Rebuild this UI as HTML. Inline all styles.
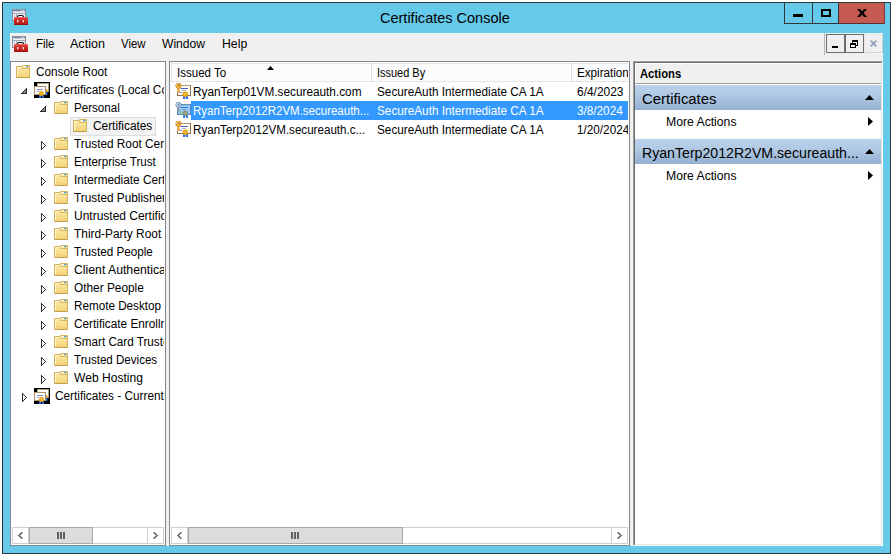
<!DOCTYPE html>
<html>
<head>
<meta charset="utf-8">
<title>Certificates Console</title>
<style>
html,body{margin:0;padding:0;}
body{width:892px;height:555px;overflow:hidden;position:relative;background:#fff;font-family:"Liberation Sans",sans-serif;font-size:12px;color:#000;}
.a{position:absolute;}
.t{position:absolute;white-space:nowrap;line-height:16px;height:16px;transform-origin:0 50%;}
#win{left:2px;top:2px;width:887px;height:550px;border:1px solid #33373c;background:#65c9e9;}
#client{left:10px;top:33px;width:873px;height:513px;background:#f0f0f0;}
.pane{background:#fff;overflow:hidden;}
.ic{position:absolute;width:16px;height:16px;overflow:visible;}
.sb{position:absolute;height:15px;border:1px solid #cfcfcf;background:#fff;}
.sbb{position:absolute;top:-1px;width:15px;height:15px;border:1px solid #cfcfcf;background:#fff;}
.thumb{position:absolute;top:-1px;height:15px;border:1px solid #a8a8a8;background:#dcdcdc;}
.grip{position:absolute;top:4px;width:2px;height:7px;background:#606060;}
.sec{position:absolute;left:635px;width:246px;height:25px;background:linear-gradient(#bad2ea,#b0c9e4 40%,#94b0d2);}
</style>
</head>
<body>
<svg width="0" height="0" style="position:absolute">
<defs>
<linearGradient id="fg" x1="0" y1="0" x2="0" y2="1"><stop offset="0" stop-color="#fdedaf"/><stop offset="1" stop-color="#f3d173"/></linearGradient>
<linearGradient id="rg" x1="0" y1="0" x2="0" y2="1"><stop offset="0" stop-color="#e0453f"/><stop offset="0.45" stop-color="#cf2a26"/><stop offset="1" stop-color="#b01612"/></linearGradient>
<symbol id="folder" viewBox="0 0 16 16">
<path d="M1.5 2.5 H7 L7.6 1.5 H14.5 V13.5 H1.5 Z" fill="url(#fg)" stroke="#d3b05a" stroke-width="1"/>
<path d="M1.5 13.5 H14.5" stroke="#c09e4c" stroke-width="1"/>
<path d="M7.2 2.8 V4.5 H14" fill="none" stroke="#d9b862" stroke-width="1"/>
<path d="M2.5 3.5 H6.5 M2.5 3.5 V12.5" fill="none" stroke="#fff6cf" stroke-width="1"/>
<rect x="9" y="2" width="2.4" height="1.2" fill="#fff"/><rect x="11.2" y="2" width="2.2" height="1.2" fill="#3d8fe0"/>
</symbol>
<symbol id="certs" viewBox="0 0 16 16">
<rect x="0" y="0" width="16" height="16" fill="#000"/>
<rect x="3.5" y="1.5" width="11" height="8" fill="#fff" stroke="#b29c78"/>
<rect x="0.5" y="4.5" width="11" height="8" fill="#fff" stroke="#a8926e"/>
<rect x="3" y="7" width="6" height="1" fill="#8a90dc"/><rect x="3" y="9" width="2" height="1" fill="#9aa0e0"/>
<rect x="12" y="7" width="1.4" height="3" fill="#e0a010"/><rect x="12" y="10" width="1.4" height="3" fill="#2a6ae8"/>
<path d="M5.2 13 H7.2 L7 16 H5 Z M7.8 13 H9.8 L10 16 H8 Z" fill="#2a6ae8"/>
<circle cx="7.4" cy="11.5" r="2.5" fill="#e6a00e"/><circle cx="7.4" cy="11.4" r="1" fill="#f6cc48"/>
</symbol>
<symbol id="cert" viewBox="0 0 16 16">
<rect x="2.5" y="2.5" width="13" height="10" fill="#fffdf8" stroke="#93734e"/>
<path d="M3 2.5 H15" stroke="#b39a76" stroke-width="1"/>
<rect x="5.6" y="5" width="7.3" height="1" fill="#5058c4"/><rect x="7" y="7" width="3.8" height="1" fill="#a4aae2"/><rect x="5" y="9" width="2" height="1" fill="#7484d4"/>
<path d="M8.2 13 H10.3 L10 16 H8 Z M10.7 13 H12.8 L13 16 H11 Z" fill="#2462ea"/>
<circle cx="10.3" cy="11.3" r="2.7" fill="#e7a10f"/><circle cx="10.3" cy="11.2" r="1.1" fill="#f8d24c"/>
<path d="M3.3 5 V9.9" stroke="#e89a28" stroke-width="1.9" fill="none"/><path d="M2.7 5 V9.6" stroke="#fbd48a" stroke-width="0.7" fill="none"/><rect x="4.1" y="8" width="0.9" height="1" fill="#c07a18"/>
<circle cx="3.5" cy="2.7" r="2.7" fill="#f4b448" stroke="#d28a22" stroke-width="0.9"/><path d="M1.6 2.6 A2 2 0 0 1 3.4 0.9" stroke="#fdebc0" stroke-width="0.9" fill="none"/><circle cx="3.6" cy="2.3" r="0.75" fill="#6b4a22"/>
</symbol>
<symbol id="certsel" viewBox="0 0 16 16">
<rect x="2.5" y="2.5" width="13" height="10" fill="#99cafc" stroke="#5f86b6"/>
<rect x="5.6" y="5" width="7.3" height="1" fill="#4278dc"/><rect x="7" y="7" width="3.8" height="1" fill="#6ea2f2"/><rect x="4.6" y="9.6" width="2.4" height="1.2" fill="#8ccc3c"/>
<path d="M8.2 13 H10.3 L10 16 H8 Z M10.7 13 H12.8 L13 16 H11 Z" fill="#2a7cf2"/>
<circle cx="10.3" cy="11.3" r="2.7" fill="#86967a"/><circle cx="10.3" cy="11.2" r="1.1" fill="#a3ae98"/>
<path d="M3.3 5 V9.9" stroke="#8a9fb3" stroke-width="1.9" fill="none"/><rect x="4.1" y="8" width="0.9" height="1" fill="#6f859b"/>
<circle cx="3.5" cy="2.7" r="2.7" fill="#a9c6de" stroke="#8098b0" stroke-width="0.9"/><path d="M1.6 2.6 A2 2 0 0 1 3.4 0.9" stroke="#d4e6f6" stroke-width="0.9" fill="none"/><circle cx="3.6" cy="2.3" r="0.75" fill="#6d8297"/>
</symbol>
<symbol id="mmc" viewBox="0 0 16 16">
<rect x="0.5" y="0.5" width="13" height="11" fill="#eef0f5" stroke="#8d909c"/>
<rect x="1" y="1" width="12" height="1.3" fill="#7c87a6"/><rect x="1" y="2.3" width="12" height="0.7" fill="#c9cddb"/><rect x="9" y="1.2" width="1" height="1" fill="#fff"/><rect x="11" y="1.2" width="1" height="1" fill="#fff"/>
<rect x="1" y="4" width="12" height="1" fill="#a4a8b8"/><rect x="4" y="5" width="1" height="6" fill="#a4a8b8"/><rect x="2" y="6.5" width="1" height="1" fill="#8d909c"/>
<path d="M5.6 8.6 V7.4 Q5.6 6.5 7 6.5 H10 Q11.4 6.5 11.4 7.4 V8.6" fill="#fff" stroke="#111" stroke-width="1.2"/>
<path d="M3 8 H15 L16 9 V16 H2 V9 Z" fill="url(#rg)"/>
<rect x="3" y="8" width="12" height="1" fill="#e8625a"/>
<rect x="5" y="11" width="1.4" height="2.4" fill="#f0d8d0"/><rect x="10.6" y="11" width="1.4" height="2.4" fill="#f0d8d0"/>
<rect x="2" y="15" width="14" height="1" fill="#9a100c"/>
</symbol>
<symbol id="exp" viewBox="0 0 7 7"><path d="M5.5 0.5 V5.5 H0.5 Z" fill="#8a8a8a" stroke="#2c2c2c" stroke-width="1" shape-rendering="crispEdges"/></symbol>
<symbol id="col" viewBox="0 0 6 10"><path d="M0.5 0.5 V8.5 L4.5 4.5 Z" fill="#fff" stroke="#333" stroke-width="1" shape-rendering="crispEdges"/></symbol>
</defs>
</svg>

<div id="win" class="a"></div>

<!-- caption buttons -->
<div class="a" style="left:784px;top:3px;width:54px;height:20px;border-left:1px solid #33373c;border-bottom:1px solid #33373c;"></div>
<div class="a" style="left:812px;top:3px;width:1px;height:20px;background:#33373c;"></div>
<div class="a" style="left:838px;top:3px;width:45px;height:20px;background:#c45a50;border-left:1px solid #33373c;border-right:1px solid #7c3a36;border-bottom:1px solid #5c3030;"></div>
<div class="a" style="left:793px;top:14px;width:10px;height:3px;background:#000;"></div>
<div class="a" style="left:821px;top:9px;width:6px;height:4px;border:2px solid #000;"></div>
<svg class="a" style="left:857px;top:9px;" width="10" height="8" viewBox="0 0 10 8"><path d="M0 0 H3 L5 2.4 L7 0 H10 L6.5 4 L10 8 H7 L5 5.6 L3 8 H0 L3.5 4 Z" fill="#000"/></svg>

<svg class="ic" style="left:12px;top:9px"><use href="#mmc"/></svg>

<div id="client" class="a"></div>
<svg class="ic" style="left:12px;top:36px"><use href="#mmc"/></svg>

<!-- MDI child buttons -->
<div class="a" style="left:824px;top:33px;width:1px;height:22px;background:#b4b4b4;"></div>
<div class="a" style="left:826px;top:34px;width:17px;height:17px;border:1px solid #6d6d6d;background:#f0f0f0;"></div>
<div class="a" style="left:845px;top:34px;width:17px;height:17px;border:1px solid #6d6d6d;background:#f0f0f0;"></div>
<div class="a" style="left:864px;top:34px;width:17px;height:17px;border:1px solid #d0d0d0;border-top-color:#e8e8e8;border-left-color:#e8e8e8;background:#f0f0f0;"></div>
<div class="a" style="left:832px;top:46px;width:6px;height:2px;background:#000;"></div>
<div class="a" style="left:852px;top:40px;width:4px;height:3px;border:1px solid #000;border-top-width:2px;"></div>
<div class="a" style="left:850px;top:43px;width:4px;height:2px;border:1px solid #000;border-top-width:2px;background:#f0f0f0;"></div>
<svg class="a" style="left:870px;top:40px;" width="7" height="7" viewBox="0 0 7 7"><path d="M0.7 0.7 L6.3 6.3 M6.3 0.7 L0.7 6.3" stroke="#93a6bc" stroke-width="1.9" fill="none"/></svg>

<!-- ===== tree pane ===== -->
<div class="a" style="left:10px;top:61px;width:154px;height:483px;border:1px solid #828790;background:#fff;"></div>
<div class="a pane" id="tree" style="left:11px;top:62px;width:153px;height:465px;">
<div class="a" style="left:59px;top:55px;width:84px;height:17px;border:1px solid #dedede;background:#f2f2f2;"></div>
<svg class="ic" style="left:4px;top:2px"><use href="#folder"/></svg>
<svg class="ic" style="left:23px;top:20px"><use href="#certs"/></svg>
<svg class="a" style="left:10px;top:26px" width="7" height="7"><use href="#exp"/></svg>
<svg class="ic" style="left:42px;top:38px"><use href="#folder"/></svg>
<svg class="a" style="left:29px;top:44px" width="7" height="7"><use href="#exp"/></svg>
<svg class="ic" style="left:61px;top:56px"><use href="#folder"/></svg>
<svg class="ic" style="left:42px;top:74px"><use href="#folder"/></svg>
<svg class="a" style="left:30px;top:79px" width="6" height="10"><use href="#col"/></svg>
<svg class="ic" style="left:42px;top:92px"><use href="#folder"/></svg>
<svg class="a" style="left:30px;top:97px" width="6" height="10"><use href="#col"/></svg>
<svg class="ic" style="left:42px;top:110px"><use href="#folder"/></svg>
<svg class="a" style="left:30px;top:115px" width="6" height="10"><use href="#col"/></svg>
<svg class="ic" style="left:42px;top:128px"><use href="#folder"/></svg>
<svg class="a" style="left:30px;top:133px" width="6" height="10"><use href="#col"/></svg>
<svg class="ic" style="left:42px;top:146px"><use href="#folder"/></svg>
<svg class="a" style="left:30px;top:151px" width="6" height="10"><use href="#col"/></svg>
<svg class="ic" style="left:42px;top:164px"><use href="#folder"/></svg>
<svg class="a" style="left:30px;top:169px" width="6" height="10"><use href="#col"/></svg>
<svg class="ic" style="left:42px;top:182px"><use href="#folder"/></svg>
<svg class="a" style="left:30px;top:187px" width="6" height="10"><use href="#col"/></svg>
<svg class="ic" style="left:42px;top:200px"><use href="#folder"/></svg>
<svg class="a" style="left:30px;top:205px" width="6" height="10"><use href="#col"/></svg>
<svg class="ic" style="left:42px;top:218px"><use href="#folder"/></svg>
<svg class="a" style="left:30px;top:223px" width="6" height="10"><use href="#col"/></svg>
<svg class="ic" style="left:42px;top:236px"><use href="#folder"/></svg>
<svg class="a" style="left:30px;top:241px" width="6" height="10"><use href="#col"/></svg>
<svg class="ic" style="left:42px;top:254px"><use href="#folder"/></svg>
<svg class="a" style="left:30px;top:259px" width="6" height="10"><use href="#col"/></svg>
<svg class="ic" style="left:42px;top:272px"><use href="#folder"/></svg>
<svg class="a" style="left:30px;top:277px" width="6" height="10"><use href="#col"/></svg>
<svg class="ic" style="left:42px;top:290px"><use href="#folder"/></svg>
<svg class="a" style="left:30px;top:295px" width="6" height="10"><use href="#col"/></svg>
<svg class="ic" style="left:42px;top:308px"><use href="#folder"/></svg>
<svg class="a" style="left:30px;top:313px" width="6" height="10"><use href="#col"/></svg>
<svg class="ic" style="left:23px;top:326px"><use href="#certs"/></svg>
<svg class="a" style="left:11px;top:331px" width="6" height="10"><use href="#col"/></svg>
<div class="t" style="left:24.72px;top:2px;transform:scaleX(0.9806);">Console Root</div>
<div class="t" style="left:43.62px;top:20px;transform:scaleX(0.9849);">Certificates (Local Computer)</div>
<div class="t" style="left:62.53px;top:38px;transform:scaleX(0.9674);">Personal</div>
<div class="t" style="left:82.01px;top:56px;transform:scaleX(0.9881);">Certificates</div>
<div class="t" style="left:62.90px;top:74px;transform:scaleX(0.9835);">Trusted Root Certification Authorities</div>
<div class="t" style="left:62.63px;top:92px;transform:scaleX(0.9655);">Enterprise Trust</div>
<div class="t" style="left:62.62px;top:110px;transform:scaleX(0.9841);">Intermediate Certification Authorities</div>
<div class="t" style="left:62.90px;top:128px;transform:scaleX(0.9831);">Trusted Publishers</div>
<div class="t" style="left:62.60px;top:146px;transform:scaleX(0.9988);">Untrusted Certificates</div>
<div class="t" style="left:62.90px;top:164px;transform:scaleX(0.9909);">Third-Party Root Certification Authorities</div>
<div class="t" style="left:62.90px;top:182px;transform:scaleX(0.9741);">Trusted People</div>
<div class="t" style="left:62.58px;top:200px;transform:scaleX(1.0195);">Client Authentication Issuers</div>
<div class="t" style="left:62.61px;top:218px;transform:scaleX(0.9870);">Other People</div>
<div class="t" style="left:62.63px;top:236px;transform:scaleX(0.9739);">Remote Desktop</div>
<div class="t" style="left:62.62px;top:254px;transform:scaleX(0.9837);">Certificate Enrollment Requests</div>
<div class="t" style="left:62.63px;top:272px;transform:scaleX(0.9733);">Smart Card Trusted Roots</div>
<div class="t" style="left:62.90px;top:290px;transform:scaleX(0.9640);">Trusted Devices</div>
<div class="t" style="left:62.90px;top:308px;transform:scaleX(1.0074);">Web Hosting</div>
<div class="t" style="left:43.62px;top:326px;transform:scaleX(0.9827);">Certificates - Current User</div>

</div>
<!-- tree scrollbar -->
<div class="sb" style="left:12px;top:527px;width:150px;">
<div class="sbb" style="left:-1px;"></div><div class="sbb" style="right:-1px;"></div>
<div class="thumb" style="left:16px;width:62px;"><div class="grip" style="left:27px"></div><div class="grip" style="left:30px"></div><div class="grip" style="left:33px"></div></div>
<svg class="a" style="left:5px;top:4px" width="5" height="7" viewBox="0 0 5 7"><path d="M4.4 0.3 L0.9 3.5 L4.4 6.7" fill="none" stroke="#505050" stroke-width="1.35"/></svg>
<svg class="a" style="right:5px;top:4px" width="5" height="7" viewBox="0 0 5 7"><path d="M0.6 0.3 L4.1 3.5 L0.6 6.7" fill="none" stroke="#505050" stroke-width="1.35"/></svg>
</div>

<!-- ===== list pane ===== -->
<div class="a" style="left:169px;top:61px;width:459px;height:483px;border:1px solid #828790;background:#fff;"></div>
<div class="a pane" id="list" style="left:170px;top:62px;width:458px;height:465px;">
<div class="a" style="left:1px;top:1px;width:460px;height:17px;border:1px solid #e5e5e5;background:#fcfcfc;"></div>
<div class="a" style="left:201px;top:1px;width:1px;height:19px;background:#dcdcdc;"></div>
<div class="a" style="left:401px;top:1px;width:1px;height:19px;background:#dcdcdc;"></div>
<svg class="a" style="left:97px;top:4px" width="7" height="4" viewBox="0 0 7 4"><path d="M0 4 L3.5 0 L7 4 Z" fill="#000"/></svg>
<div class="a" style="left:21px;top:39px;width:437px;height:19px;background:#3399ff;"></div>
<svg class="ic" style="left:5px;top:21px"><use href="#cert"/></svg>
<svg class="ic" style="left:5px;top:40px"><use href="#certsel"/></svg>
<svg class="ic" style="left:5px;top:59px"><use href="#cert"/></svg>
<div class="t" style="left:7.24px;top:3px;transform:scaleX(0.9600);">Issued To</div>
<div class="t" style="left:207.09px;top:3px;transform:scaleX(0.9135);">Issued By</div>
<div class="t" style="left:406.53px;top:3px;transform:scaleX(0.9712);">Expiration Date</div>
<div class="t" style="left:22.72px;top:22px;transform:scaleX(0.9829);">RyanTerp01VM.secureauth.com</div>
<div class="t" style="left:207.02px;top:22px;transform:scaleX(0.9799);">SecureAuth Intermediate CA 1A</div>
<div class="t" style="left:406.50px;top:22px;transform:scaleX(0.9956);">6/4/2023</div>
<div class="t" style="left:22.74px;top:41px;transform:scaleX(0.9577);color:#fff;">RyanTerp2012R2VM.secureauth...</div>
<div class="t" style="left:207.02px;top:41px;transform:scaleX(0.9799);color:#fff;">SecureAuth Intermediate CA 1A</div>
<div class="t" style="left:406.52px;top:41px;transform:scaleX(0.9783);color:#fff;">3/8/2024</div>
<div class="t" style="left:22.73px;top:60px;transform:scaleX(0.9670);">RyanTerp2012VM.secureauth.c...</div>
<div class="t" style="left:207.02px;top:60px;transform:scaleX(0.9799);">SecureAuth Intermediate CA 1A</div>
<div class="t" style="left:406.52px;top:60px;transform:scaleX(0.9788);">1/20/2024</div>

</div>
<!-- list scrollbar -->
<div class="sb" style="left:171px;top:527px;width:455px;">
<div class="sbb" style="left:-1px;"></div><div class="sbb" style="right:-1px;"></div>
<div class="thumb" style="left:16px;width:213px;"><div class="grip" style="left:102px"></div><div class="grip" style="left:105px"></div><div class="grip" style="left:108px"></div></div>
<svg class="a" style="left:5px;top:4px" width="5" height="7" viewBox="0 0 5 7"><path d="M4.4 0.3 L0.9 3.5 L4.4 6.7" fill="none" stroke="#505050" stroke-width="1.35"/></svg>
<svg class="a" style="right:5px;top:4px" width="5" height="7" viewBox="0 0 5 7"><path d="M0.6 0.3 L4.1 3.5 L0.6 6.7" fill="none" stroke="#505050" stroke-width="1.35"/></svg>
</div>

<!-- ===== actions pane ===== -->
<div class="a" style="left:633px;top:61px;width:248px;height:483px;border-top:1px solid #a0a0a0;border-left:1px solid #a0a0a0;border-right:1px solid #fff;border-bottom:1px solid #fff;background:#fff;"></div>
<div class="a" style="left:634px;top:62px;width:246px;height:481px;border-top:1px solid #696969;border-left:1px solid #696969;border-right:1px solid #e3e3e3;border-bottom:1px solid #e3e3e3;"></div>
<div class="a" style="left:635px;top:63px;width:246px;height:20px;background:#f0f0f0;border-top:1px solid #fff;border-left:1px solid #fff;box-sizing:border-box;"></div>
<div class="a" style="left:635px;top:83px;width:246px;height:1px;background:#a0a0a0;"></div>
<div class="sec" style="top:85px;"></div>
<div class="sec" style="top:139px;"></div>
<svg class="a" style="left:865px;top:95px" width="9" height="5" viewBox="0 0 9 5"><path d="M0 5 L4.5 0 L9 5 Z" fill="#000"/></svg>
<svg class="a" style="left:865px;top:149px" width="9" height="5" viewBox="0 0 9 5"><path d="M0 5 L4.5 0 L9 5 Z" fill="#000"/></svg>
<svg class="a" style="left:868px;top:117px" width="5" height="9" viewBox="0 0 5 9"><path d="M0 0 L5 4.5 L0 9 Z" fill="#000"/></svg>
<svg class="a" style="left:868px;top:171px" width="5" height="9" viewBox="0 0 5 9"><path d="M0 0 L5 4.5 L0 9 Z" fill="#000"/></svg>

<div class="t" style="left:380.43px;top:8px;transform:scaleX(0.9669);font-size:15px;line-height:20px;height:20px;">Certificates Console</div>
<div class="t" style="left:35.84px;top:36px;transform:scaleX(0.9556);">File</div>
<div class="t" style="left:70.40px;top:36px;transform:scaleX(1.0455);">Action</div>
<div class="t" style="left:121.30px;top:36px;transform:scaleX(0.9500);">View</div>
<div class="t" style="left:162.40px;top:36px;transform:scaleX(1.0093);">Window</div>
<div class="t" style="left:221.98px;top:36px;transform:scaleX(1.0217);">Help</div>
<div class="t" style="left:639.80px;top:66px;transform:scaleX(0.9364);font-weight:700;">Actions</div>
<div class="t" style="left:642.04px;top:89px;transform:scaleX(0.9605);font-size:15.5px;line-height:20px;height:20px;">Certificates</div>
<div class="t" style="left:666.18px;top:114px;transform:scaleX(1.0162);">More Actions</div>
<div class="t" style="left:641.89px;top:143px;transform:scaleX(0.9114);font-size:15.5px;line-height:20px;height:20px;">RyanTerp2012R2VM.secureauth...</div>
<div class="t" style="left:666.18px;top:168px;transform:scaleX(1.0162);">More Actions</div>

</body>
</html>
